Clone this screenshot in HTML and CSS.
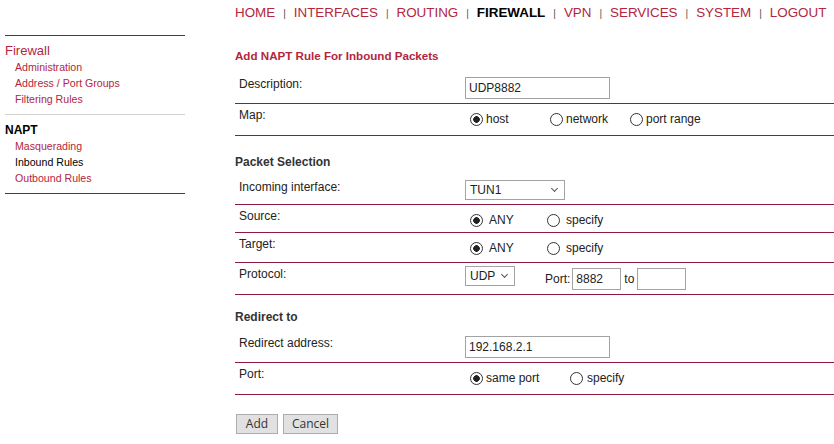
FILE: index.html
```html
<!DOCTYPE html>
<html lang="en">
<head>
    <meta charset="UTF-8">
    <meta name="viewport" content="width=device-width, initial-scale=1.0">
    <title>Firewall - NAPT Inbound Rules</title>
    <link rel="stylesheet" href="styles.css">
</head>
<body>
    <div class="topnav">
        <a href="#">HOME</a><span class="sep">|</span>
        <a href="#">INTERFACES</a><span class="sep">|</span>
        <a href="#">ROUTING</a><span class="sep">|</span>
        <a href="#" class="active">FIREWALL</a><span class="sep">|</span>
        <a href="#">VPN</a><span class="sep">|</span>
        <a href="#">SERVICES</a><span class="sep">|</span>
        <a href="#">SYSTEM</a><span class="sep">|</span>
        <a href="#">LOGOUT</a>
    </div>

    <div class="layout">
        <!-- Menu lateral -->
        <div class="sidebar">
            <div class="side-group first">
                <a href="#" class="side-title">Firewall</a>
                <ul>
                    <li><a href="#">Administration</a></li>
                    <li><a href="#">Address / Port Groups</a></li>
                    <li><a href="#">Filtering Rules</a></li>
                </ul>
            </div>
            <div class="side-group last">
                <div class="side-title current">NAPT</div>
                <ul>
                    <li><a href="#">Masquerading</a></li>
                    <li class="current">Inbound Rules</li>
                    <li><a href="#">Outbound Rules</a></li>
                </ul>
            </div>
        </div>

        <!-- Formulario -->
        <div class="main">
            <h1>Add NAPT Rule For Inbound Packets</h1>

            <div class="form-row">
                <div class="label">Description:</div>
                <div class="control ctl-input"><input type="text" class="text-wide" value="UDP8882"></div>
            </div>
            <div class="form-row">
                <div class="label">Map:</div>
                <div class="control ctl-radio opts-map">
                    <label class="opt"><input type="radio" name="map" checked>host</label>
                    <label class="opt"><input type="radio" name="map">network</label>
                    <label class="opt"><input type="radio" name="map">port range</label>
                </div>
            </div>

            <h2>Packet Selection</h2>

            <div class="form-row">
                <div class="label">Incoming interface:</div>
                <div class="control ctl-input">
                    <span class="select-wrap"><select class="sel-iface"><option>TUN1</option></select></span>
                </div>
            </div>
            <div class="form-row">
                <div class="label">Source:</div>
                <div class="control ctl-radio tight opts-any">
                    <label class="opt"><input type="radio" name="src" checked>ANY</label>
                    <label class="opt"><input type="radio" name="src">specify</label>
                </div>
            </div>
            <div class="form-row">
                <div class="label">Target:</div>
                <div class="control ctl-radio mid opts-any">
                    <label class="opt"><input type="radio" name="dst" checked>ANY</label>
                    <label class="opt"><input type="radio" name="dst">specify</label>
                </div>
            </div>
            <div class="form-row">
                <div class="label">Protocol:</div>
                <div class="control ctl-proto">
                    <span class="select-wrap"><select class="sel-proto"><option>UDP</option></select></span>
                    <span class="port-text">Port:</span>
                    <input type="text" class="text-port" value="8882">
                    <span class="to-text">to</span>
                    <input type="text" class="text-port" value="">
                </div>
            </div>

            <h2 class="redirect">Redirect to</h2>

            <div class="form-row">
                <div class="label">Redirect address:</div>
                <div class="control ctl-input"><input type="text" class="text-wide" value="192.168.2.1"></div>
            </div>
            <div class="form-row">
                <div class="label">Port:</div>
                <div class="control ctl-radio opts-port">
                    <label class="opt"><input type="radio" name="rport" checked>same port</label>
                    <label class="opt"><input type="radio" name="rport">specify</label>
                </div>
            </div>

            <div class="buttons">
                <button>Add</button>
                <button>Cancel</button>
            </div>
        </div>
    </div>
</body>
</html>
```

FILE: styles.css
```css
body {
    font-family: "Liberation Sans", Arial, sans-serif;
    font-size: 12px;
    color: #222;
    background-color: white;
    margin: 0;
}
a {
    color: #b3263d;
    text-decoration: none;
}
.topnav {
    display: flex;
    align-items: baseline;
    margin-left: 235px;
    padding-top: 4px;
    height: 22px;
    line-height: 18px;
    font-size: 13.4px;
}
.topnav a.active {
    color: black;
    font-weight: bold;
}
.sep {
    padding: 0 8px;
    font-size: 10px;
    color: #555;
}
.layout {
    display: flex;
    align-items: flex-start;
}
.sidebar {
    width: 180px;
    margin-left: 5px;
    margin-top: 9px;
}
.side-group {
    padding: 7px 0 7px;
    border-bottom: 1px solid #d3d3d3;
}
.side-group.first {
    border-top: 1px solid #8c1b3f;
}
.side-group.last {
    border-bottom-color: #8c1b3f;
}
.side-title {
    display: block;
    font-size: 13px;
    line-height: 16px;
}
.side-title.current {
    font-size: 12px;
    font-weight: bold;
    color: black;
}
.side-group ul {
    list-style: none;
    margin: 0;
    padding: 0 0 0 10px;
}
.side-group li {
    font-size: 10.6px;
    line-height: 16px;
}
.side-group li.current {
    color: black;
}
.main {
    flex: 1;
    margin-left: 50px;
}
h1 {
    font-size: 11.6px;
    line-height: 16px;
    color: #b3263d;
    margin: 22px 0 9px;
}
h2 {
    font-size: 12px;
    line-height: 16px;
    color: #333;
    margin: 18px 0 6px;
}
h2.redirect {
    margin: 14px 0 7px;
}
.form-row {
    display: grid;
    grid-template-columns: 230px 1fr;
    border-bottom: 1px solid #8c1b3f;
}
.label {
    padding: 3px 0 0 4px;
    line-height: 16px;
}
.control {
    display: flex;
    align-items: center;
}
.ctl-input {
    padding: 4px 0;
}
.ctl-radio {
    padding: 6px 0 7px;
}
.ctl-radio.tight {
    padding-bottom: 3px;
}
.ctl-radio.mid {
    padding-bottom: 5px;
}
.ctl-proto {
    padding: 5px 0 4px;
}
input[type="text"] {
    font-family: "Liberation Sans", Arial, sans-serif;
    font-size: 12px;
    color: #222;
    height: 22px;
    box-sizing: border-box;
    border: 1px solid #a3a3a3;
    padding: 0 3px;
    margin: 0;
}
.text-wide {
    width: 145px;
}
.text-port {
    width: 49px;
}
.opt {
    display: inline-flex;
    align-items: center;
    line-height: 18px;
}
input[type="radio"] {
    appearance: none;
    width: 13px;
    height: 13px;
    margin: 0 3px 0 5px;
    border: 1px solid #333;
    border-radius: 50%;
    box-sizing: border-box;
    background: white;
}
input[type="radio"]:checked {
    background: radial-gradient(circle, #222 0, #222 3px, white 3.6px);
}
.opts-map .opt {
    width: 80px;
}
.opts-any .opt {
    width: 77px;
}
.opts-any input[type="radio"] {
    margin-right: 6px;
}
.opts-port .opt {
    width: 100px;
}
.opts-port .opt + .opt input[type="radio"] {
    margin-right: 4px;
}
.select-wrap {
    position: relative;
    display: inline-block;
}
.select-wrap::after {
    content: "";
    position: absolute;
    right: 8px;
    top: 6px;
    width: 4px;
    height: 4px;
    border-right: 1px solid #555;
    border-bottom: 1px solid #555;
    transform: rotate(45deg);
    pointer-events: none;
}
select {
    appearance: none;
    font-family: "Liberation Sans", Arial, sans-serif;
    font-size: 12px;
    color: #222;
    height: 20px;
    border: 1px solid #a3a3a3;
    border-radius: 0;
    background: white;
    padding: 0 4px;
    margin: 0;
    display: block;
}
.sel-iface {
    width: 100px;
}
.sel-proto {
    width: 50px;
}
.ctl-proto .select-wrap {
    align-self: flex-start;
    margin-top: -2px;
}
.port-text {
    margin: 0 2px 0 30px;
}
.to-text {
    margin: 0 3px;
}
.buttons {
    display: flex;
    gap: 5px;
    margin: 19px 0 0 1px;
}
button {
    font-family: "Open Sans", sans-serif;
    font-size: 12px;
    color: #333;
    height: 20px;
    min-width: 42px;
    padding: 0 8px;
    background-color: #e1e1e1;
    border: 1px solid #adadad;
    line-height: 16px;
}
```
